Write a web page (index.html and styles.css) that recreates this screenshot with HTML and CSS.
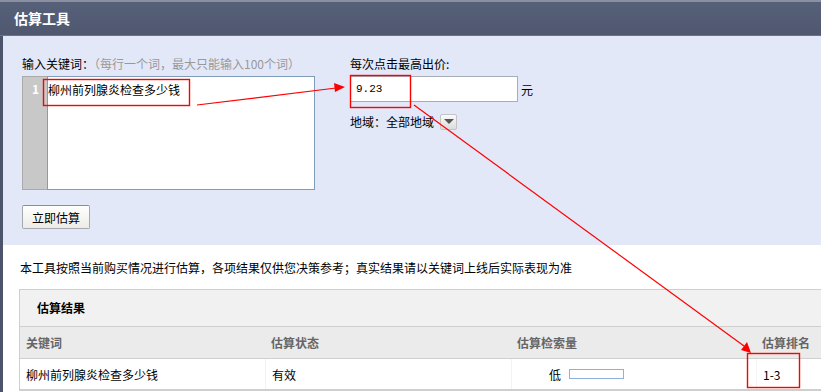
FILE: index.html
```html
<!DOCTYPE html>
<html lang="zh-CN">

<head>
    <meta charset="UTF-8">
    <title>估算工具</title>
    <link rel="stylesheet" href="styles.css">
</head>

<body>

    <div class="page">
        <div class="head">估算工具</div>

        <div class="frame">
            <div class="panel">
                <div class="col-left">
                    <div class="label">输入关键词：<span class="hint">（每行一个词，最大只能输入100个词）</span></div>
                    <div class="editor">
                        <div class="gutter">1</div>
                        <div class="area">柳州前列腺炎检查多少钱</div>
                    </div>
                    <button class="btn">立即估算</button>
                </div>

                <div class="col-right">
                    <div class="label">每次点击最高出价:</div>
                    <div class="price-row">
                        <div class="price">9.23</div>
                        <span class="unit">元</span>
                    </div>
                    <div class="region">
                        <span>地域：全部地域</span>
                        <span class="drop"><span class="tri"></span></span>
                    </div>
                </div>
            </div>

            <div class="notice">本工具按照当前购买情况进行估算，各项结果仅供您决策参考；真实结果请以关键词上线后实际表现为准</div>

            <div class="result">
                <div class="result-title">估算结果</div>
                <div class="row row-head">
                    <div class="cell c1">关键词</div>
                    <div class="cell c2">估算状态</div>
                    <div class="cell c3">估算检索量</div>
                    <div class="cell c4">估算排名</div>
                </div>
                <div class="row row-data">
                    <div class="cell c1">柳州前列腺炎检查多少钱</div>
                    <div class="cell c2">有效</div>
                    <div class="cell c3 vol">低 <span class="bar"></span></div>
                    <div class="cell c4">1-3</div>
                </div>
            </div>
        </div>

        <!-- 红色标注 -->
        <svg class="marks" width="821" height="392" viewBox="0 0 821 392">
            <rect class="box" x="43.5" y="79.5" width="146" height="26" />
            <rect class="box" x="350.5" y="75.5" width="60" height="32" />
            <rect class="box" x="747.5" y="353.5" width="52" height="34" />
            <line class="ln" x1="197" y1="105" x2="336" y2="88" />
            <polygon class="head-tip" points="345,87 334,83 335,92" />
            <line class="ln" x1="414" y1="105" x2="744" y2="346" />
            <polygon class="head-tip" points="751,353 741,350 747,342" />
        </svg>
    </div>

</body>

</html>
```

FILE: styles.css
```css
* {
    box-sizing: border-box;
}

body {
    margin: 0;
    font-family: "Noto Sans CJK SC", sans-serif;
    font-size: 12px;
    color: #000;
    background: #fff;
    overflow: hidden;
}

.page {
    position: relative;
    width: 821px;
    height: 392px;
    overflow: hidden;
}

.head {
    height: 36px;
    padding-left: 14px;
    line-height: 33px;
    font-size: 14px;
    font-weight: bold;
    color: #fff;
    background: linear-gradient(#566079, #4f586f);
    border-top: 2px solid #8b90a0;
    border-bottom: 1px solid #6b7389;
}

.frame {
    border-left: 3px solid #4c546b;
    height: 356px;
}

.panel {
    display: flex;
    background: #e3e8f8;
    padding: 20px 0 16px 19px;
}

.label {
    line-height: 16px;
    margin-bottom: 4px;
}

.hint {
    color: #999;
}

.col-left {
    width: 328px;
}

.editor {
    display: flex;
    width: 293px;
    height: 114px;
}

.gutter {
    width: 25px;
    background: #c8c8c8;
    border: 1px solid #aaa;
    border-right: none;
    color: #fff;
    font-weight: bold;
    text-align: right;
    padding: 4px 8px 0 0;
    line-height: 16px;
}

.area {
    flex: 1;
    background: #fff;
    border: 1px solid #7f9db9;
    padding: 5px 0 0 0;
    line-height: 16px;
}

.btn {
    display: block;
    margin-top: 15px;
    width: 68px;
    height: 24px;
    padding: 0;
    font-family: inherit;
    font-size: 12px;
    color: #000;
    background: linear-gradient(#ffffff, #ecebe6);
    border: 1px solid #a5a9b0;
    border-top: 1px solid #6f8fd6;
    border-radius: 2px;
}

.price-row {
    display: flex;
    align-items: center;
}

.price {
    width: 168px;
    height: 26px;
    background: #fff;
    border: 1px solid #a7adb6;
    padding-left: 5px;
    line-height: 24px;
    font-family: "Liberation Mono", monospace;
    font-size: 11px;
}

.unit {
    margin-left: 3px;
}

.region {
    display: flex;
    align-items: center;
    margin-top: 11px;
}

.drop {
    display: inline-flex;
    align-items: center;
    justify-content: center;
    width: 17px;
    height: 16px;
    margin-left: 6px;
    background: linear-gradient(#fafafa, #dcdcdc);
    border: 1px solid #c4c4c4;
    border-radius: 2px;
}

.tri {
    width: 0;
    height: 0;
    border-left: 5px solid transparent;
    border-right: 5px solid transparent;
    border-top: 5px solid #555;
}

.notice {
    padding: 15px 0 0 17px;
    line-height: 16px;
    height: 44px;
}

.result {
    margin-left: 16px;
    width: 820px;
    border: 1px solid #cfcfcf;
    border-right: none;
}

.result-title {
    height: 36px;
    line-height: 36px;
    padding-left: 17px;
    font-weight: bold;
    background: #f1f1f1;
}

.row {
    display: flex;
    border-top: 1px solid #cfcfcf;
}

.row-head {
    height: 32px;
    background: #ebebeb;
    color: #666;
    font-weight: bold;
}

.row-data {
    height: 32px;
    background: #fff;
    border-bottom: 1px solid #cfcfcf;
}

.cell {
    display: flex;
    align-items: center;
    padding-left: 6px;
}

.row-data .cell + .cell {
    border-left: 1px solid #f3f3f3;
}

.c1 {
    width: 245px;
}

.c2 {
    width: 246px;
}

.c3 {
    width: 245px;
}

.vol {
    padding-left: 37px;
}

.bar {
    display: inline-block;
    width: 55px;
    height: 10px;
    margin-left: 8px;
    border: 1px solid #8fb0e3;
    background: #fff;
}

.c4 {
    flex: 1;
}

.marks {
    position: absolute;
    left: 0;
    top: 0;
    pointer-events: none;
}

.box {
    fill: none;
    stroke: #ff0000;
    stroke-width: 1.4;
}

.ln {
    stroke: #ff0000;
    stroke-width: 1.2;
}

.head-tip {
    fill: #ff0000;
}
```
